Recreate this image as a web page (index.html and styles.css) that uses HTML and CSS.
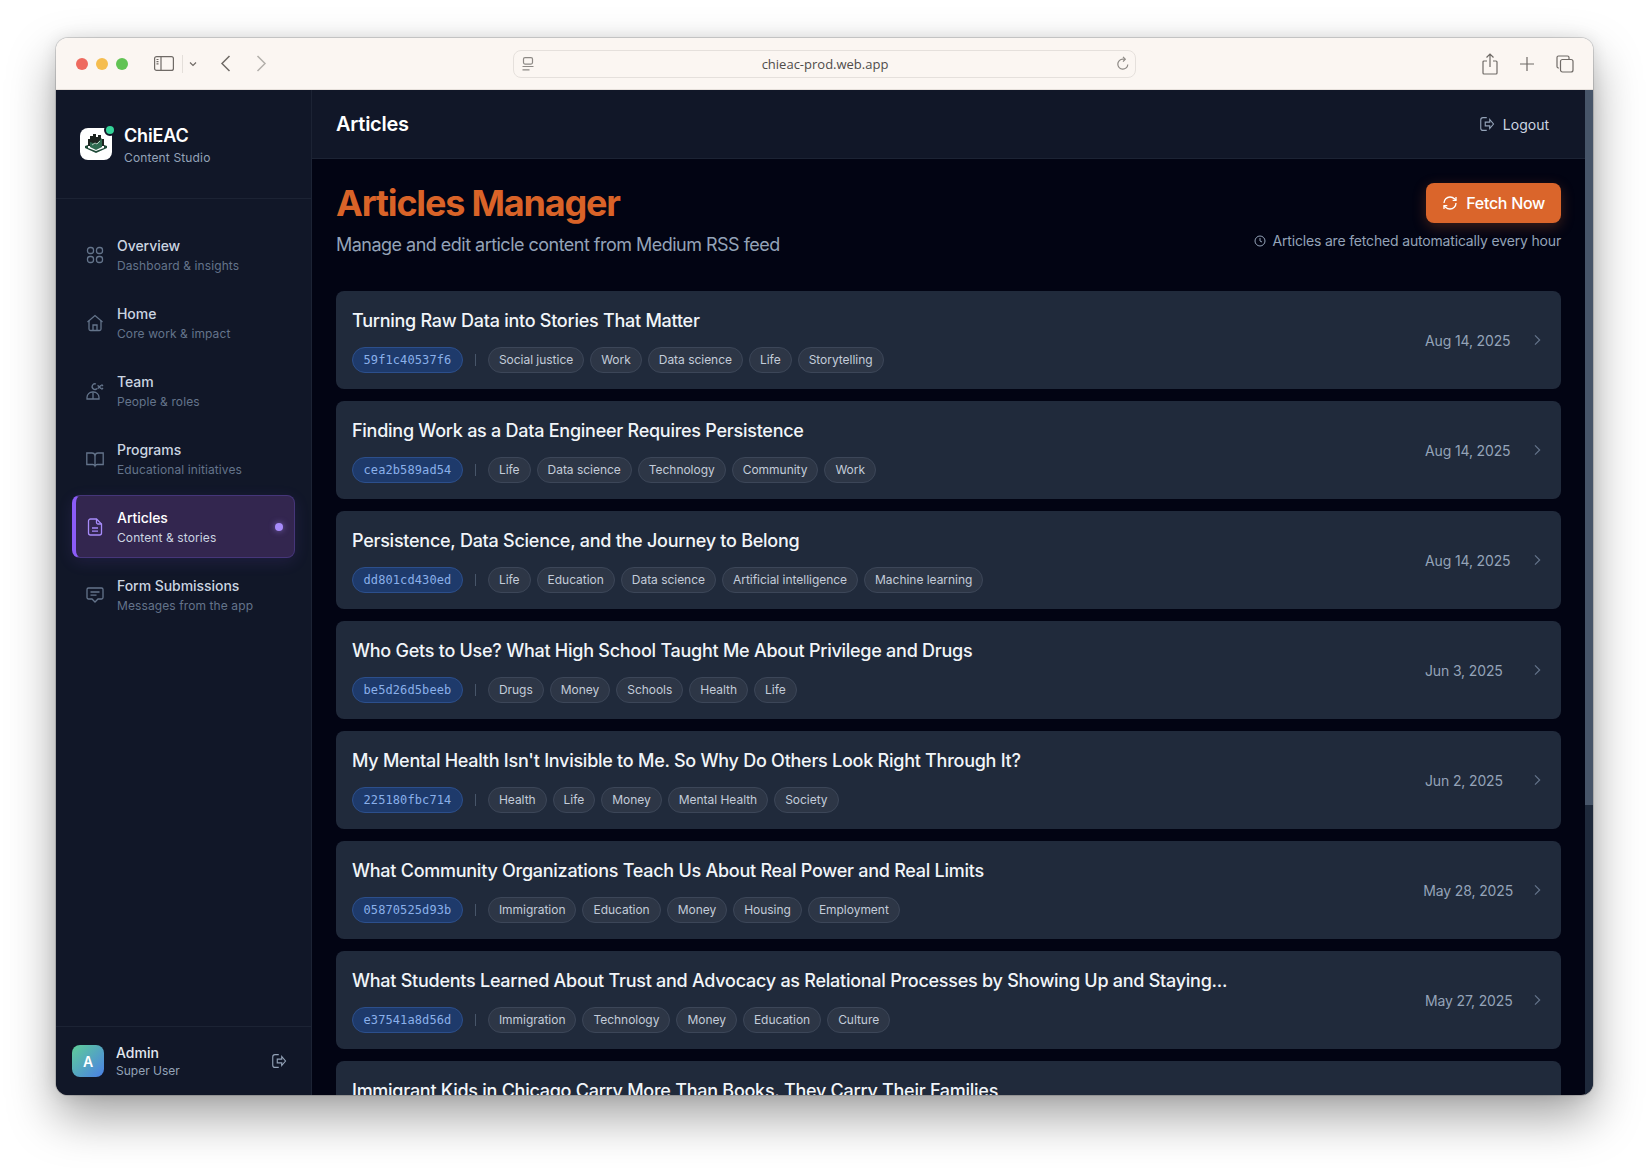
FILE: index.html
```html
<!DOCTYPE html>
<html lang="en">
<head>
  <meta charset="UTF-8">
  <title>Articles - ChiEAC</title>
  <link rel="stylesheet" href="styles.css">
</head>
<body>
  <svg class="sprites" width="0" height="0">
    <symbol id="i-logout" viewBox="0 0 24 24"><path d="M13 3.500H8a3 3 0 0 0-3 3v11a3 3 0 0 0 3 3h5"/><path d="M11 9.500h6V6l5 6-5 6v-3.500h-6z"/></symbol>
    <symbol id="i-chevron" viewBox="0 0 24 24"><path d="M9 5l7 7-7 7"/></symbol>
  </svg>

  <div class="window">
    <div class="toolbar">
      <div class="toolbar-left">
        <span class="light red"></span>
        <span class="light yellow"></span>
        <span class="light green"></span>
        <svg class="tb-sidebar" width="20" height="15" viewBox="0 0 20 15"><rect x="0.600" y="0.600" width="18.800" height="13.800" rx="2"/><path d="M7 0.600v13.800"/><path d="M2.500 3.500h2M2.500 5.700h2M2.500 7.900h2"/></svg>
        <span class="tb-divider"></span>
        <svg class="tb-small" width="8" height="6" viewBox="0 0 8 6"><path d="M1 1.500l3 3 3-3"/></svg>
        <svg class="tb-back" width="11" height="17" viewBox="0 0 11 17"><path d="M9.500 1L2 8.500 9.500 16"/></svg>
        <svg class="tb-forward" width="11" height="17" viewBox="0 0 11 17"><path d="M1.500 1L9 8.500 1.500 16"/></svg>
      </div>
      <div class="address">
        <svg class="addr-page" width="12" height="14" viewBox="0 0 12 14"><rect x="1.500" y="0.600" width="9" height="6.500" rx="1.500"/><path d="M0.500 9.500h11M0.500 12.800h7"/></svg>
        <span class="addr-url">chieac-prod.web.app</span>
        <svg class="addr-reload" width="14" height="15" viewBox="0 0 14 15"><path d="M11.800 8.500a5 5 0 1 1-5-5.300h2"/><path d="M7 0.800l2.300 2.400L7 5.600"/></svg>
      </div>
      <div class="toolbar-right">
        <svg width="16" height="22" viewBox="0 0 16 22"><path d="M5 8H2a1 1 0 0 0-1 1v11a1 1 0 0 0 1 1h12a1 1 0 0 0 1-1V9a1 1 0 0 0-1-1h-3"/><path d="M8 14V1.500M4.500 4.500L8 1l3.500 3.500"/></svg>
        <svg width="14" height="14" viewBox="0 0 14 14"><path d="M7 0v14M0 7h14"/></svg>
        <svg width="18" height="18" viewBox="0 0 18 18"><path d="M3 13H2.500A1.500 1.500 0 0 1 1 11.500v-9A1.500 1.500 0 0 1 2.500 1h9A1.500 1.500 0 0 1 13 2.500V4"/><rect x="4.500" y="4.500" width="12.500" height="12.500" rx="2"/></svg>
      </div>
    </div>

    <div class="app">
      <aside class="sidebar">
        <div class="brand">
          <div class="logo">
            <svg width="24" height="20" viewBox="0 0 24 20">
              <path class="logo-city" d="M4 12V5h2V2h3V0h3v3h2V1h3v4h3v7z"/>
              <path class="logo-book" d="M6 8l6 2 6-6v9l-6 3-6-3z"/>
              <path class="logo-base" d="M1 12l3-1v3l8 3 8-3v-3l3 1v2l-11 5L1 14z"/>
              <path class="logo-line" d="M8 11l3-2 2 1 3-3"/>
            </svg>
            <span class="logo-dot"></span>
          </div>
          <div class="brand-text">
            <div class="brand-name">ChiEAC</div>
            <div class="brand-sub">Content Studio</div>
          </div>
        </div>

        <nav class="nav">
          <a class="nav-item">
            <svg class="nav-icon" viewBox="0 0 18 18"><rect x="1.500" y="1.500" width="6" height="6" rx="2.500"/><rect x="10.500" y="1.500" width="6" height="6" rx="2.500"/><rect x="1.500" y="10.500" width="6" height="6" rx="2.500"/><rect x="10.500" y="10.500" width="6" height="6" rx="2.500"/></svg>
            <div class="nav-text"><div class="nav-title">Overview</div><div class="nav-sub">Dashboard &amp; insights</div></div>
          </a>
          <a class="nav-item">
            <svg class="nav-icon" viewBox="0 0 18 18"><path d="M1.500 8L9 1.500 16.500 8"/><path d="M3 6.800V15a1.500 1.500 0 0 0 1.500 1.500h9A1.500 1.500 0 0 0 15 15V6.800"/><path d="M7 16.500V11h4v5.500"/></svg>
            <div class="nav-text"><div class="nav-title">Home</div><div class="nav-sub">Core work &amp; impact</div></div>
          </a>
          <a class="nav-item">
            <svg class="nav-icon" viewBox="0 0 18 18"><path d="M1 17v-1.500A5.500 5.500 0 0 1 6.500 10h1a5.500 5.500 0 0 1 5.500 5.500V17z"/><path d="M7 10.500V17"/><path d="M11 6.500a2.800 2.800 0 1 1-1-4.500"/><path d="M11.500 3.500c1.500 0 2 3 4 3M11.500 6.500c1.500 0 2-3 4-3M15.500 2.500l1.500 1.500M15.500 7.500L17 6"/></svg>
            <div class="nav-text"><div class="nav-title">Team</div><div class="nav-sub">People &amp; roles</div></div>
          </a>
          <a class="nav-item">
            <svg class="nav-icon" viewBox="0 0 18 18"><path d="M0.800 3h5A3.200 3.200 0 0 1 9 5a3.200 3.200 0 0 1 3.200-2h5v11.500h-5.700A2.500 2.500 0 0 0 9 16a2.500 2.500 0 0 0-2.500-1.500H0.800z"/><path d="M9 5v11"/></svg>
            <div class="nav-text"><div class="nav-title">Programs</div><div class="nav-sub">Educational initiatives</div></div>
          </a>
          <a class="nav-item active">
            <svg class="nav-icon" viewBox="0 0 18 18"><path d="M10.500 1H4.500A2 2 0 0 0 2.500 3v12a2 2 0 0 0 2 2h9a2 2 0 0 0 2-2V6z"/><path d="M10.500 1v3.500a1.500 1.500 0 0 0 1.500 1.500h3.500"/><path d="M6 10h6M6 13.200h6"/></svg>
            <div class="nav-text"><div class="nav-title">Articles</div><div class="nav-sub">Content &amp; stories</div></div>
            <span class="nav-dot"></span>
          </a>
          <a class="nav-item">
            <svg class="nav-icon" viewBox="0 0 18 18"><path d="M2.500 2h13A1.500 1.500 0 0 1 17 3.500v8a1.500 1.500 0 0 1-1.500 1.500H12l-3 3-3-3H2.500A1.500 1.500 0 0 1 1 11.500v-8A1.500 1.500 0 0 1 2.500 2z"/><path d="M4.500 6h9M4.500 9.200h6"/></svg>
            <div class="nav-text"><div class="nav-title">Form Submissions</div><div class="nav-sub">Messages from the app</div></div>
          </a>
        </nav>

        <div class="user">
          <div class="avatar">A</div>
          <div class="user-text">
            <div class="user-name">Admin</div>
            <div class="user-role">Super User</div>
          </div>
          <svg class="user-logout"><use href="#i-logout"/></svg>
        </div>
      </aside>

      <div class="main">
        <header class="header">
          <h2 class="header-title">Articles</h2>
          <button class="logout-btn"><svg class="logout-icon"><use href="#i-logout"/></svg>Logout</button>
        </header>

        <main class="content">
          <div class="page-head">
            <div>
              <h1 class="page-title">Articles Manager</h1>
              <p class="page-sub">Manage and edit article content from Medium RSS feed</p>
            </div>
            <div class="page-actions">
              <button class="fetch-btn">
                <svg width="16" height="16" viewBox="0 0 24 24"><path d="M3 12a9 9 0 0 1 9-9 9.750 9.750 0 0 1 6.740 2.740L21 8"/><path d="M21 3v5h-5"/><path d="M21 12a9 9 0 0 1-9 9 9.750 9.750 0 0 1-6.740-2.740L3 16"/><path d="M8 16H3v5"/></svg>
                Fetch Now
              </button>
              <div class="fetch-note">
                <svg width="12" height="12" viewBox="0 0 24 24"><circle cx="12" cy="12" r="10"/><path d="M12 6v6l4 2"/></svg>
                Articles are fetched automatically every hour
              </div>
            </div>
          </div>

          <div class="article-list">
            <article class="card">
              <div class="card-body">
                <h3 class="card-title">Turning Raw Data into Stories That Matter</h3>
                <div class="card-meta">
                  <span class="id-chip">59f1c40537f6</span><span class="sep"></span>
                  <span class="tag">Social justice</span><span class="tag">Work</span><span class="tag">Data science</span><span class="tag">Life</span><span class="tag">Storytelling</span>
                </div>
              </div>
              <time class="card-date">Aug 14, 2025</time>
              <svg class="card-chevron"><use href="#i-chevron"/></svg>
            </article>
            <article class="card">
              <div class="card-body">
                <h3 class="card-title">Finding Work as a Data Engineer Requires Persistence</h3>
                <div class="card-meta">
                  <span class="id-chip">cea2b589ad54</span><span class="sep"></span>
                  <span class="tag">Life</span><span class="tag">Data science</span><span class="tag">Technology</span><span class="tag">Community</span><span class="tag">Work</span>
                </div>
              </div>
              <time class="card-date">Aug 14, 2025</time>
              <svg class="card-chevron"><use href="#i-chevron"/></svg>
            </article>
            <article class="card">
              <div class="card-body">
                <h3 class="card-title">Persistence, Data Science, and the Journey to Belong</h3>
                <div class="card-meta">
                  <span class="id-chip">dd801cd430ed</span><span class="sep"></span>
                  <span class="tag">Life</span><span class="tag">Education</span><span class="tag">Data science</span><span class="tag">Artificial intelligence</span><span class="tag">Machine learning</span>
                </div>
              </div>
              <time class="card-date">Aug 14, 2025</time>
              <svg class="card-chevron"><use href="#i-chevron"/></svg>
            </article>
            <article class="card">
              <div class="card-body">
                <h3 class="card-title">Who Gets to Use? What High School Taught Me About Privilege and Drugs</h3>
                <div class="card-meta">
                  <span class="id-chip">be5d26d5beeb</span><span class="sep"></span>
                  <span class="tag">Drugs</span><span class="tag">Money</span><span class="tag">Schools</span><span class="tag">Health</span><span class="tag">Life</span>
                </div>
              </div>
              <time class="card-date">Jun 3, 2025</time>
              <svg class="card-chevron"><use href="#i-chevron"/></svg>
            </article>
            <article class="card">
              <div class="card-body">
                <h3 class="card-title">My Mental Health Isn't Invisible to Me. So Why Do Others Look Right Through It?</h3>
                <div class="card-meta">
                  <span class="id-chip">225180fbc714</span><span class="sep"></span>
                  <span class="tag">Health</span><span class="tag">Life</span><span class="tag">Money</span><span class="tag">Mental Health</span><span class="tag">Society</span>
                </div>
              </div>
              <time class="card-date">Jun 2, 2025</time>
              <svg class="card-chevron"><use href="#i-chevron"/></svg>
            </article>
            <article class="card">
              <div class="card-body">
                <h3 class="card-title">What Community Organizations Teach Us About Real Power and Real Limits</h3>
                <div class="card-meta">
                  <span class="id-chip">05870525d93b</span><span class="sep"></span>
                  <span class="tag">Immigration</span><span class="tag">Education</span><span class="tag">Money</span><span class="tag">Housing</span><span class="tag">Employment</span>
                </div>
              </div>
              <time class="card-date">May 28, 2025</time>
              <svg class="card-chevron"><use href="#i-chevron"/></svg>
            </article>
            <article class="card">
              <div class="card-body">
                <h3 class="card-title">What Students Learned About Trust and Advocacy as Relational Processes by Showing Up and Staying...</h3>
                <div class="card-meta">
                  <span class="id-chip">e37541a8d56d</span><span class="sep"></span>
                  <span class="tag">Immigration</span><span class="tag">Technology</span><span class="tag">Money</span><span class="tag">Education</span><span class="tag">Culture</span>
                </div>
              </div>
              <time class="card-date">May 27, 2025</time>
              <svg class="card-chevron"><use href="#i-chevron"/></svg>
            </article>
            <article class="card">
              <div class="card-body">
                <h3 class="card-title">Immigrant Kids in Chicago Carry More Than Books. They Carry Their Families</h3>
              </div>
            </article>
          </div>
        </main>
      </div>

      <div class="scrollbar"><div class="scrollbar-thumb"></div></div>
    </div>
  </div>
</body>
</html>
```

FILE: styles.css
```css
* {
  box-sizing: border-box;
}

html, body {
  height: 100%;
}

body {
  margin: 0;
  padding: 38px 56px 73px;
  background: #ffffff;
  font-family: Inter, "Liberation Sans", sans-serif;
  overflow: hidden;
}

h1, h2, h3, p {
  margin: 0;
}

.sprites {
  display: none;
}

.window {
  display: flex;
  flex-direction: column;
  height: 100%;
  border-radius: 12px;
  overflow: hidden;
  box-shadow: 0 0 0 1px rgba(0, 0, 0, 0.14), 0 22px 48px rgba(0, 0, 0, 0.36), 0 0 16px rgba(0, 0, 0, 0.1);
}

/* Browser toolbar */
.toolbar {
  display: flex;
  align-items: center;
  flex: 0 0 52px;
  background: #fbf6f2;
  border-bottom: 1px solid #e6e0db;
}

.toolbar-left {
  display: flex;
  align-items: center;
  flex: 0 0 457px;
  padding-left: 20px;
}

.light {
  width: 12px;
  height: 12px;
  margin-right: 8px;
  border-radius: 50%;
}

.light.red { background: #ee6a5f; }
.light.yellow { background: #f5bd4f; }
.light.green { background: #61c354; }

.toolbar svg {
  fill: none;
  stroke: #6f6a66;
  stroke-width: 1.200;
}

.tb-sidebar {
  margin-left: 18px;
}

.tb-divider {
  width: 1px;
  height: 18px;
  margin-left: 8px;
  background: #e4dfda;
}

.tb-small {
  margin-left: 6px;
}

.tb-back {
  margin-left: 23px;
  stroke-width: 1.500 !important;
}

.tb-forward {
  margin-left: 25px;
  stroke: #b3afab !important;
  stroke-width: 1.500 !important;
}

.address {
  display: flex;
  align-items: center;
  justify-content: space-between;
  flex: 0 0 623px;
  height: 28px;
  padding: 0 5px 0 8px;
  border: 1px solid #e5e0dc;
  border-radius: 8px;
}

.addr-url {
  font-family: "Open Sans", "Liberation Sans", sans-serif;
  font-size: 13px;
  color: #4f4c4a;
}

.address .addr-page,
.address .addr-reload {
  stroke: #8d8985;
}

.toolbar-right {
  display: flex;
  align-items: center;
  justify-content: flex-end;
  gap: 22px;
  flex: 1;
  padding-right: 19px;
}

/* App */
.app {
  display: flex;
  flex: 1;
  min-height: 0;
  background: #020413;
}

.sidebar {
  display: flex;
  flex-direction: column;
  flex: 0 0 256px;
  background: #111728;
  border-right: 1px solid #1c2334;
}

.brand {
  display: flex;
  align-items: center;
  gap: 12px;
  padding: 32px 24px;
  border-bottom: 1px solid #1c2334;
}

.logo {
  position: relative;
  display: flex;
  align-items: center;
  justify-content: center;
  width: 32px;
  height: 32px;
  background: #ffffff;
  border-radius: 8px;
}

.logo-city { fill: #1d2420; }
.logo-book { fill: #2f6b50; }
.logo-base { fill: #1f4a38; }
.logo-line { fill: none; stroke: #d5e8dd; stroke-width: 0.800; }

.logo-dot {
  position: absolute;
  top: -4px;
  right: -4px;
  width: 12px;
  height: 12px;
  background: #34d399;
  border: 2px solid #111728;
  border-radius: 50%;
}

.brand-name {
  font-size: 18px;
  line-height: 28px;
  font-weight: 600;
  letter-spacing: -0.15px;
  color: #ffffff;
}

.brand-sub {
  font-size: 12px;
  line-height: 16px;
  letter-spacing: 0.15px;
  color: #94a3b8;
}

.nav {
  display: flex;
  flex-direction: column;
  gap: 5px;
  flex: 1;
  padding: 24px 16px;
}

.nav-item {
  display: flex;
  align-items: center;
  gap: 13px;
  height: 63px;
  padding: 0 11px 0 13px;
  border: 1px solid transparent;
  border-radius: 8px;
}

.nav-icon {
  flex: 0 0 18px;
  width: 18px;
  height: 18px;
  fill: none;
  stroke: #64748b;
  stroke-width: 1.300;
}

.nav-text {
  flex: 1;
}

.nav-title {
  font-size: 14px;
  line-height: 20px;
  font-weight: 500;
  letter-spacing: -0.05px;
  color: #cbd5e1;
}

.nav-sub {
  font-size: 12px;
  line-height: 16px;
  margin-top: 2px;
  letter-spacing: 0.1px;
  color: #64748b;
}

.nav-item.active {
  background: #33264f;
  border-color: #46367a;
  border-left: 4px solid #8b5cf6;
  padding-left: 10px;
  box-shadow: 0 4px 16px rgba(139, 92, 246, 0.12);
}

.nav-item.active .nav-icon { stroke: #a78bfa; }
.nav-item.active .nav-title { color: #ffffff; }
.nav-item.active .nav-sub { color: #cbd5e1; }

.nav-dot {
  width: 8px;
  height: 8px;
  background: #a78bfa;
  border-radius: 50%;
  box-shadow: 0 0 6px rgba(167, 139, 250, 0.6);
}

.user {
  display: flex;
  align-items: center;
  gap: 12px;
  padding: 16px;
  border-top: 1px solid #1c2334;
}

.avatar {
  display: flex;
  align-items: center;
  justify-content: center;
  width: 32px;
  height: 32px;
  background: linear-gradient(135deg, #5fcf98, #4a7fe6);
  border-radius: 8px;
  font-size: 14px;
  font-weight: 600;
  color: #ffffff;
}

.user-text {
  flex: 1;
}

.user-name {
  font-size: 14px;
  line-height: 20px;
  font-weight: 500;
  color: #e2e8f0;
}

.user-role {
  font-size: 12px;
  line-height: 16px;
  color: #94a3b8;
}

.user-logout {
  width: 18px;
  height: 18px;
  margin-right: 8px;
  fill: none;
  stroke: #94a3b8;
  stroke-width: 1.500;
}

.main {
  display: flex;
  flex-direction: column;
  flex: 1;
  min-width: 0;
}

.header {
  display: flex;
  align-items: center;
  justify-content: space-between;
  flex: 0 0 69px;
  padding: 0 24px;
  background: #111728;
  border-bottom: 1px solid #1c2334;
}

.header-title {
  font-size: 20px;
  font-weight: 600;
  letter-spacing: -0.26px;
  color: #ffffff;
}

.logout-btn {
  display: flex;
  align-items: center;
  gap: 8px;
  padding: 8px 12px;
  background: none;
  border: none;
  font: inherit;
  font-size: 14px;
  color: #cbd5e1;
}

.logout-icon {
  width: 18px;
  height: 18px;
  fill: none;
  stroke: #94a3b8;
  stroke-width: 1.500;
}

.content {
  flex: 1;
  min-height: 0;
  padding: 24px 24px 0;
  overflow: hidden;
}

.page-head {
  display: flex;
  justify-content: space-between;
  margin-bottom: 32px;
}

.page-title {
  font-size: 36px;
  line-height: 40px;
  font-weight: 700;
  letter-spacing: -1.2px;
  color: #d96328;
}

.page-sub {
  margin-top: 8px;
  font-size: 18px;
  line-height: 28px;
  letter-spacing: -0.52px;
  color: #94a3b8;
}

.page-actions {
  display: flex;
  flex-direction: column;
  align-items: flex-end;
  gap: 8px;
}

.fetch-btn {
  display: flex;
  align-items: center;
  gap: 8px;
  height: 40px;
  padding: 0 16px;
  background: #da652b;
  border: none;
  border-radius: 8px;
  box-shadow: 0 4px 14px rgba(218, 101, 43, 0.28);
  font: inherit;
  font-size: 16px;
  font-weight: 500;
  letter-spacing: -0.3px;
  color: #ffffff;
}

.fetch-btn svg {
  fill: none;
  stroke: #ffffff;
  stroke-width: 2;
}

.fetch-note {
  display: flex;
  align-items: center;
  gap: 6px;
  font-size: 14px;
  line-height: 20px;
  letter-spacing: -0.17px;
  color: #94a3b8;
}

.fetch-note svg {
  fill: none;
  stroke: #94a3b8;
  stroke-width: 2;
}

.article-list {
  display: flex;
  flex-direction: column;
  gap: 12px;
}

.card {
  display: flex;
  align-items: center;
  flex: 0 0 98px;
  padding: 16px;
  background: #202a3b;
  border-radius: 8px;
}

.card-body {
  flex: 1;
  align-self: flex-start;
  min-width: 0;
}

.card-title {
  font-size: 18px;
  line-height: 28px;
  font-weight: 500;
  letter-spacing: -0.26px;
  color: #f1f5f9;
}

.card-meta {
  display: flex;
  align-items: center;
  gap: 6px;
  margin-top: 12px;
}

.id-chip {
  padding: 4px 10.500px;
  background: #1e3a6b;
  border: 1px solid #2c4f8c;
  border-radius: 13px;
  font-family: "DejaVu Sans Mono", monospace;
  font-size: 12px;
  line-height: 16px;
  letter-spacing: 0.1px;
  color: #8ab0ea;
}

.sep {
  width: 1px;
  height: 12px;
  margin: 0 6px;
  background: #475569;
}

.tag {
  padding: 4px 10px;
  background: #2d3646;
  border: 1px solid #3c4658;
  border-radius: 13px;
  font-size: 12px;
  line-height: 16px;
  letter-spacing: -0.03px;
  color: #c3ccd9;
}

.card-date {
  flex: 0 0 88px;
  margin-right: 16px;
  font-size: 14px;
  letter-spacing: -0.14px;
  white-space: nowrap;
  color: #94a3b8;
}

.card-chevron {
  flex: 0 0 16px;
  width: 16px;
  height: 16px;
  fill: none;
  stroke: #64748b;
  stroke-width: 1.800;
}

.scrollbar {
  flex: 0 0 8px;
  background: #1e293b;
}

.scrollbar-thumb {
  height: 715px;
  background: #475569;
}
```
